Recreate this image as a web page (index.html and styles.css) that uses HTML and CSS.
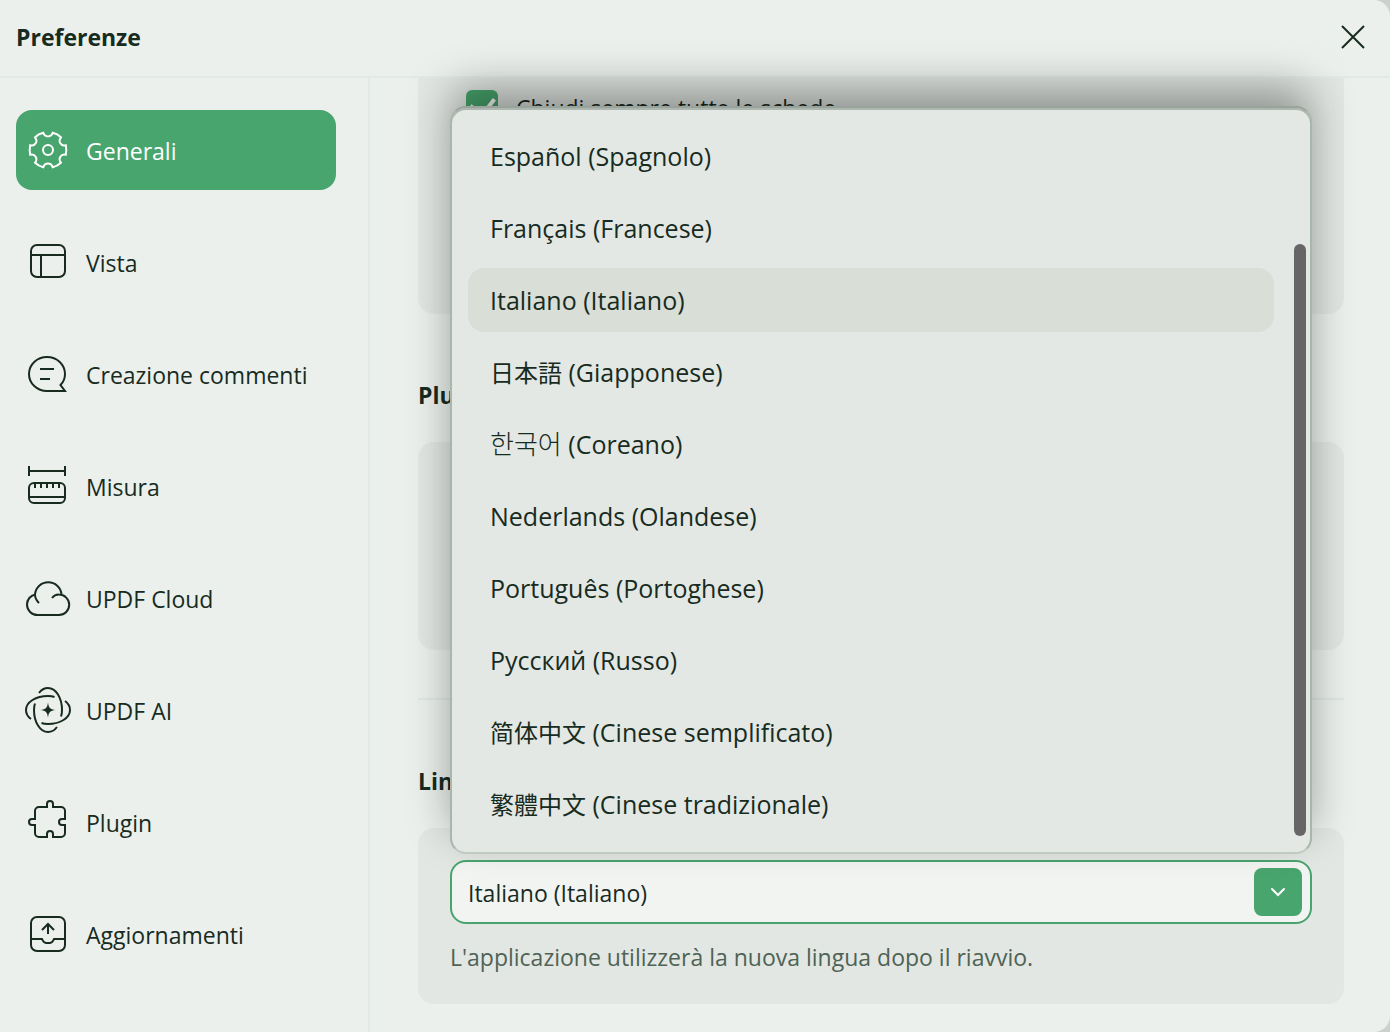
FILE: index.html
```
<!DOCTYPE html>
<html lang="it">
<head>
  <meta charset="UTF-8" />
  <meta name="viewport" content="width=device-width, initial-scale=1.0"/>
  <title>Preferenze</title>
  <link rel="stylesheet" href="styles.css">
</head>
<body>

  <div class="window">
    <header class="titlebar">
      <h1>Preferenze</h1>
      <button class="close-btn" aria-label="Chiudi">
        <svg viewBox="0 0 26 26"><path d="M2 2L24 24M24 2L2 24"/></svg>
      </button>
    </header>

    <div class="main">
      <nav class="sidebar">
        <button class="nav-item active">
          <svg class="icon" viewBox="0 0 48 48">
            <circle cx="24" cy="24" r="5"/>
            <path d="M19.3 6.8C20 9 22 10.5 24 10.5S28 9 28.7 6.8C32 7.6 34.6 9 36.9 11.3C35.2 13.6 35.4 15.8 36.3 17.2C37.3 18.9 39.4 19.9 41.8 19.2C42.5 22.3 42.5 25.7 41.8 28.8C39.4 28.1 37.3 29.1 36.3 30.8C35.4 32.2 35.2 34.4 36.9 36.7C34.6 39 32 40.4 28.7 41.2C28 39 26 37.5 24 37.5S20 39 19.3 41.2C16 40.4 13.4 39 11.1 36.7C12.8 34.4 12.6 32.2 11.7 30.8C10.7 29.1 8.6 28.1 6.2 28.8C5.5 25.7 5.5 22.3 6.2 19.2C8.6 19.9 10.7 18.9 11.7 17.2C12.6 15.8 12.8 13.6 11.1 11.3C13.4 9 16 7.6 19.3 6.8Z"/>
          </svg>
          <span>Generali</span>
        </button>
        <button class="nav-item">
          <svg class="icon" viewBox="0 0 48 48">
            <rect x="7" y="7" width="34" height="32" rx="6"/>
            <path d="M7 17H41M17 17V39"/>
          </svg>
          <span>Vista</span>
        </button>
        <button class="nav-item">
          <svg class="icon" viewBox="0 0 48 48">
            <path d="M23 41H41L36.5 35C39.5 32 41 28 41 24C41 14.5 33 7 23 7S5 14.5 5 24S13 41 23 41ZM16 19H30M16 29H26"/>
          </svg>
          <span>Creazione commenti</span>
        </button>
        <button class="nav-item">
          <svg class="icon" viewBox="0 0 48 48">
            <path d="M5 4V14M41 4V14M5 9H41M5 35H41M11 21V26M17 21V26M23 21V26M29 21V26M35 21V26"/>
            <rect x="5" y="21" width="36" height="20" rx="5"/>
          </svg>
          <span>Misura</span>
        </button>
        <button class="nav-item">
          <svg class="icon" viewBox="0 0 48 48">
            <path d="M15 29C12.5 26.5 11 24 11 20.5A13.3 13.3 0 0 1 37.5 20.5M11 20.5C6.5 21.5 3 25.5 3 30.5A10.5 10.5 0 0 0 13.5 41H35A10.2 10.2 0 0 0 35 20.6C32 20.5 29.5 22 28 24"/>
          </svg>
          <span>UPDF Cloud</span>
        </button>
        <button class="nav-item">
          <svg class="icon" viewBox="0 0 48 48">
            <path d="M15 7C17.5 3.5 20.5 2 24 2C32 2 38 12 38 24C38 26.5 37.8 28.5 37 30.5"/>
            <path d="M41 15C44.5 17.5 46 20.5 46 24C46 32 36 38 24 38C21.5 38 19.5 37.8 17.5 37"/>
            <path d="M33 41C30.5 44.5 27.5 46 24 46C16 46 10 36 10 24C10 21.5 10.2 19.5 11 17.5"/>
            <path d="M7 33C3.5 30.5 2 27.5 2 24C2 16 12 10 24 10C26.5 10 28.5 10.2 30.5 11"/>
            <path class="solid" d="M24 16.5C24.8 22 26 23.2 31.5 24C26 24.8 24.8 26 24 31.5C23.2 26 22 24.8 16.5 24C22 23.2 23.2 22 24 16.5Z"/>
          </svg>
          <span>UPDF AI</span>
        </button>
        <button class="nav-item">
          <svg class="icon" viewBox="0 0 48 48">
            <path d="M15 9H23V6A3 3 0 0 1 29 6V9H37A4 4 0 0 1 41 13V21H38A3 3 0 0 0 38 27H41V35A4 4 0 0 1 37 39H29V36A3 3 0 0 0 23 36V39H15A4 4 0 0 1 11 35V27H8A3 3 0 0 1 8 21H11V13A4 4 0 0 1 15 9Z"/>
          </svg>
          <span>Plugin</span>
        </button>
        <button class="nav-item">
          <svg class="icon" viewBox="0 0 48 48">
            <rect x="7" y="7" width="34" height="34" rx="6"/>
            <path d="M7 29H18C19 31.5 20 33 22 33H26C28 33 29 31.5 30 29H41M24 24V14M18 20L24 14L30 20"/>
          </svg>
          <span>Aggiornamenti</span>
        </button>
      </nav>

      <main class="content">
        <section class="card card-tabs">
          <label class="check-row">
            <input type="checkbox" checked>
            <span>Chiudi sempre tutte le schede</span>
          </label>
        </section>

        <h2>Plugin</h2>
        <section class="card card-plugin"></section>

        <hr>

        <h2>Lingua</h2>
        <section class="card card-language">
          <div class="dropdown">
            <select id="language" aria-label="Lingua">
              <option>Español (Spagnolo)</option>
              <option>Français (Francese)</option>
              <option selected>Italiano (Italiano)</option>
              <option>日本語 (Giapponese)</option>
              <option>한국어 (Coreano)</option>
              <option>Nederlands (Olandese)</option>
              <option>Português (Portoghese)</option>
              <option>Русский (Russo)</option>
              <option>简体中文 (Cinese semplificato)</option>
              <option>繁體中文 (Cinese tradizionale)</option>
            </select>
            <span class="arrow">
              <svg viewBox="0 0 16 16"><path d="M2 5L8 11L14 5"/></svg>
            </span>

            <div class="menu">
              <ul role="listbox" id="options">
                <li role="option">Español (Spagnolo)</li>
                <li role="option">Français (Francese)</li>
                <li role="option" class="selected" aria-selected="true">Italiano (Italiano)</li>
                <li role="option"><span lang="ja">日本語</span> (Giapponese)</li>
                <li role="option"><span lang="ko">한국어</span> (Coreano)</li>
                <li role="option">Nederlands (Olandese)</li>
                <li role="option">Português (Portoghese)</li>
                <li role="option">Русский (Russo)</li>
                <li role="option"><span lang="zh-CN">简体中文</span> (Cinese semplificato)</li>
                <li role="option"><span lang="zh-TW">繁體中文</span> (Cinese tradizionale)</li>
              </ul>
              <div class="scrollbar"></div>
            </div>
          </div>
          <p class="hint">L'applicazione utilizzerà la nuova lingua dopo il riavvio.</p>
        </section>
      </main>
    </div>
  </div>

</body>
</html>
```
FILE: styles.css
```
* {
  box-sizing: border-box;
}

body {
  margin: 0;
  background-color: #ccd1cb;
  font-family: "Open Sans", "Noto Sans", "Noto Sans CJK SC", sans-serif;
  font-size: 23px;
  line-height: 32px;
  color: #182b1f;
}

button,
select {
  font: inherit;
  color: inherit;
  cursor: pointer;
}

svg {
  display: block;
  fill: none;
  stroke: currentColor;
  stroke-width: 2;
}

.window {
  display: flex;
  flex-direction: column;
  min-height: 100vh;
  background-color: #ebf0ec;
  border-radius: 0 16px 16px 0;
}

.titlebar {
  display: flex;
  align-items: center;
  justify-content: space-between;
  height: 78px;
  padding: 0 24px 2px 16px;
  border-bottom: 2px solid #e1eae4;
}

h1,
h2 {
  margin: 0;
  font-size: 23px;
  font-weight: 700;
}

.close-btn {
  padding: 0;
  border: none;
  background: none;
}

.close-btn svg {
  width: 26px;
  height: 26px;
}

.main {
  display: flex;
  flex: 1;
}

.sidebar {
  display: flex;
  flex-direction: column;
  flex: none;
  gap: 32px;
  width: 370px;
  padding: 32px 32px 32px 16px;
  border-right: 2px solid #e1eae4;
}

.nav-item {
  display: flex;
  align-items: center;
  gap: 14px;
  height: 80px;
  padding: 0 8px;
  border: none;
  border-radius: 16px;
  background: none;
  text-align: left;
}

.nav-item span,
.check-row span {
  padding-top: 2px;
}

.nav-item.active {
  background-color: #48a56d;
  color: #fff;
}

.icon {
  flex: none;
  width: 48px;
  height: 48px;
}

.solid {
  fill: currentColor;
  stroke: none;
}

.content {
  flex: 1;
  min-width: 0;
  padding: 0 46px 28px 48px;
}

.card {
  border-radius: 16px;
  background-color: #e2e7e3;
}

.card-tabs {
  min-height: 236px;
  padding: 12px 48px;
  border-radius: 0 0 16px 16px;
}

.card-plugin {
  min-height: 208px;
}

.card-language {
  padding: 32px 32px 30px;
}

.check-row {
  display: flex;
  align-items: flex-start;
  gap: 18px;
}

.check-row input {
  position: relative;
  width: 32px;
  height: 32px;
  margin: 0;
  appearance: none;
  border-radius: 6px;
  background-color: #48a56d;
}

.check-row input::after {
  content: "";
  position: absolute;
  left: 8px;
  top: 3px;
  width: 13px;
  height: 18px;
  border: solid #fff;
  border-width: 0 4px 4px 0;
  transform: rotate(38deg);
}

h2 {
  margin: 65px 0 31px;
}

hr {
  height: 2px;
  margin: 48px 0 0;
  border: none;
  background-color: #e1e8e3;
}

.dropdown {
  position: relative;
}

.dropdown select {
  display: block;
  width: 100%;
  height: 64px;
  padding: 2px 64px 0 16px;
  appearance: none;
  border: 2px solid #48a56d;
  border-radius: 16px;
  background-color: #f2f4f1;
}

.arrow {
  position: absolute;
  top: 8px;
  right: 10px;
  display: grid;
  place-items: center;
  width: 48px;
  height: 48px;
  border-radius: 8px;
  background-color: #48a56d;
  color: #fff;
  pointer-events: none;
}

.arrow svg {
  width: 16px;
  height: 16px;
  stroke-linecap: round;
}

/* opens upwards, over the cards */
.menu {
  position: absolute;
  left: 0;
  right: 0;
  bottom: calc(100% + 6px);
  padding: 16px 36px 16px 16px;
  border: 2px solid #a9b6ab;
  border-top-color: #98a39b;
  border-bottom-color: #bfcac0;
  border-radius: 16px;
  background-color: #e3e8e4;
  box-shadow: 0 -20px 44px -2px rgba(0, 0, 0, 0.36), inset 0 2px 0 #aeb6b0;
}

.menu ul {
  display: flex;
  flex-direction: column;
  gap: 8px;
  margin: 0;
  padding: 0;
  list-style: none;
}

.menu li {
  height: 64px;
  padding: 0 22px;
  border-radius: 16px;
  font-size: 25px;
  line-height: 64px;
  cursor: pointer;
}

.menu li.selected {
  background-color: #d9ded6;
}

/* native names in their own script */
.menu span {
  font-family: "Noto Sans CJK SC", sans-serif;
  font-size: 24px;
  line-height: 32px;
}

.menu span:lang(ja) {
  font-family: "Noto Sans CJK JP", sans-serif;
}

.menu span:lang(ko) {
  font-family: "Noto Sans CJK KR", sans-serif;
  font-size: 26px;
  font-weight: 300;
}

.menu span:lang(zh-TW) {
  font-family: "Noto Sans CJK TC", sans-serif;
}

.scrollbar {
  position: absolute;
  right: 4px;
  bottom: 16px;
  width: 12px;
  height: 592px;
  border-radius: 6px;
  background-color: #666;
}

.hint {
  margin: 16px 0 0;
  line-height: 34px;
  color: #4f6355;
}
```
